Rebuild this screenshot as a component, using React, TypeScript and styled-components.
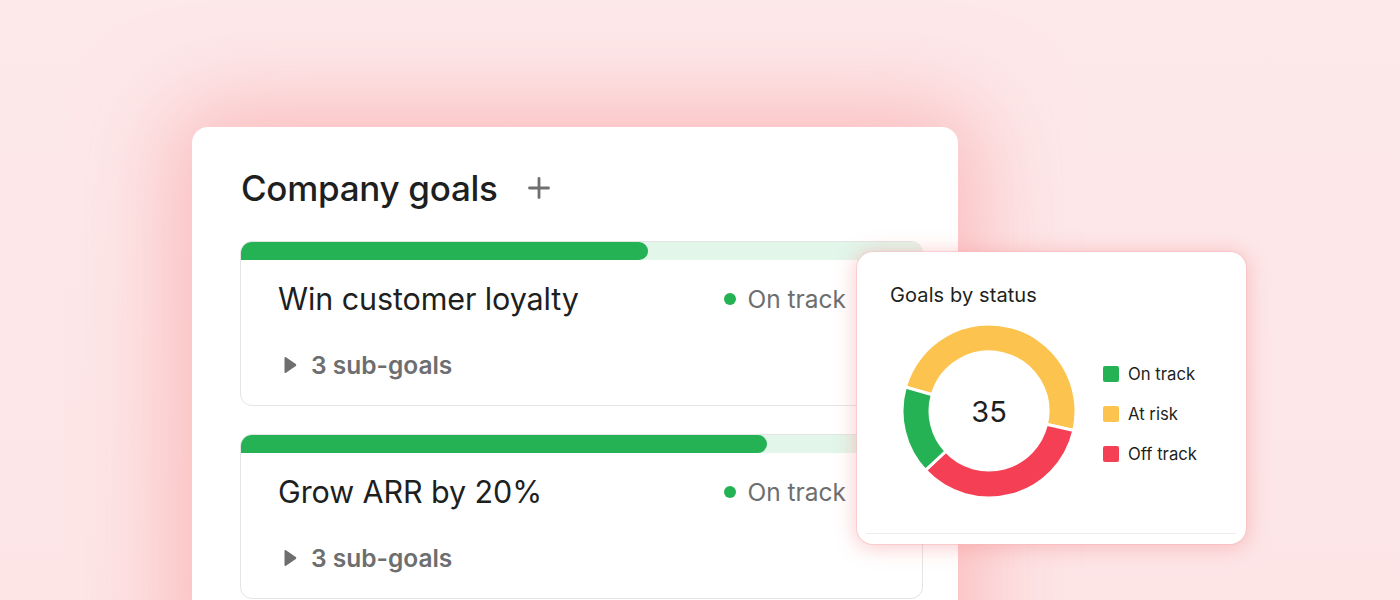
import React from "react";
import styled, { createGlobalStyle } from "styled-components";

const Global = createGlobalStyle`
  html, body { margin: 0; padding: 0; background: #fde6e8; }
  body { font-family: Inter, "Noto Sans", "Liberation Sans", sans-serif; -webkit-font-smoothing: antialiased; }
`;

const Stage = styled.div`
  position: relative;
  width: 1400px;
  height: 600px;
  overflow: hidden;
  background: linear-gradient(180deg, #fde9ea 0%, #fde5e6 100%);
  padding: 127px 0 0 192px;
  box-sizing: border-box;
`;

const MainCard = styled.section`
  width: 766px;
  height: 560px;
  box-sizing: border-box;
  background: #ffffff;
  border-radius: 16px;
  padding: 41px 35px 0 48px;
  box-shadow: 0 0 90px 20px rgba(249, 150, 152, 0.55);
  display: flex;
  flex-direction: column;
  gap: 33px;
`;

const Header = styled.div`
  display: flex;
  align-items: center;
  gap: 30px;
  height: 40px;
`;

const Title = styled.h1`
  margin: 0 0 0 1px;
  font-size: 35px;
  line-height: 40px;
  font-weight: 500;
  color: #1e1f21;
  letter-spacing: -0.3px;
`;

const PlusIcon = styled.svg`
  width: 22px;
  height: 22px;
  display: block;
`;

const GoalList = styled.div`
  display: flex;
  flex-direction: column;
  gap: 28px;
`;

const GoalCard = styled.article`
  border: 1px solid #e4e4e4;
  border-radius: 12px;
  overflow: hidden;
  background: #fff;
  box-sizing: border-box;
  height: 165px;
  display: flex;
  flex-direction: column;
`;

const Track = styled.div`
  height: 18px;
  background: #e2f6ea;
  flex: none;
`;

const Fill = styled.div`
  height: 100%;
  background: #25b255;
  border-radius: 0 9px 9px 0;
`;

const Body = styled.div`
  padding: 21px 76px 0 37px;
  display: flex;
  flex-direction: column;
  gap: 33px;
`;

const TopRow = styled.div`
  display: flex;
  align-items: center;
  justify-content: space-between;
  height: 36px;
`;

const GoalName = styled.h2`
  margin: 0;
  font-size: 30.5px;
  line-height: 36px;
  font-weight: 400;
  color: #1e1f21;
  letter-spacing: -0.1px;
`;

const Status = styled.div`
  display: flex;
  align-items: center;
  gap: 11px;
  font-size: 24.5px;
  color: #6d6e6f;
`;

const Dot = styled.span<{ $color: string }>`
  width: 12px;
  height: 12px;
  border-radius: 50%;
  background: ${(p) => p.$color};
`;

const SubRow = styled.div`
  display: flex;
  align-items: center;
  gap: 14px;
  padding-left: 6px;
  height: 30px;
  font-size: 24.5px;
  font-weight: 600;
  color: #6d6e6f;
`;

const Caret = styled.svg`
  width: 13px;
  height: 18px;
  display: block;
`;

const ChartCard = styled.aside`
  position: absolute;
  left: 857px;
  top: 252px;
  width: 389px;
  height: 292px;
  box-sizing: border-box;
  background: #fff;
  border-radius: 16px;
  box-shadow: 0 2px 20px 2px rgba(245, 140, 145, 0.45), 0 0 0 1px rgba(250, 200, 200, 0.5);
  padding: 31px 10px 0 33px;
  display: flex;
  flex-direction: column;
`;

const ChartTitle = styled.h3`
  margin: 0;
  font-size: 20px;
  line-height: 24px;
  font-weight: 400;
  color: #1e1f21;
  letter-spacing: 0.1px;
`;

const ChartBody = styled.div`
  display: flex;
  align-items: center;
  gap: 26px;
  padding-left: 11px;
  margin-top: 16px;
  height: 176px;
`;

const DonutWrap = styled.div`
  position: relative;
  width: 176px;
  height: 176px;
  flex: none;
`;

const DonutNumber = styled.div`
  position: absolute;
  inset: 0;
  display: flex;
  align-items: center;
  justify-content: center;
  font-size: 29px;
  font-weight: 400;
  color: #1e1f21;
`;

const Legend = styled.ul`
  list-style: none;
  margin: 0;
  padding: 0;
  display: flex;
  flex-direction: column;
  gap: 18px;
  margin-top: 6px;
`;

const LegendItem = styled.li`
  display: flex;
  align-items: center;
  gap: 9px;
  font-size: 16.7px;
  line-height: 22px;
  color: #1e1f21;
`;

const Swatch = styled.span<{ $color: string }>`
  width: 16px;
  height: 16px;
  border-radius: 2px;
  background: ${(p) => p.$color};
`;

const Divider = styled.hr`
  margin: 34px 0 0 -24px;
  width: 370px;
  border: none;
  border-top: 1px solid #ececec;
`;

const GREEN = "#25b255";
const YELLOW = "#fcc44f";
const RED = "#f43f55";

function arcPath(cx: number, cy: number, ro: number, ri: number, a0: number, a1: number) {
  const rad = (a: number) => ((a - 90) * Math.PI) / 180;
  const p = (r: number, a: number) => [cx + r * Math.cos(rad(a)), cy + r * Math.sin(rad(a))];
  const large = a1 - a0 > 180 ? 1 : 0;
  const [x0, y0] = p(ro, a0);
  const [x1, y1] = p(ro, a1);
  const [x2, y2] = p(ri, a1);
  const [x3, y3] = p(ri, a0);
  return `M${x0} ${y0} A${ro} ${ro} 0 ${large} 1 ${x1} ${y1} L${x2} ${y2} A${ri} ${ri} 0 ${large} 0 ${x3} ${y3} Z`;
}

const segments = [
  { color: YELLOW, from: 286, to: 463 },
  { color: RED, from: 103, to: 227 },
  { color: GREEN, from: 227, to: 286 },
];

function Donut() {
  return (
    <DonutWrap>
      <svg width="176" height="176" viewBox="0 0 176 176">
        {segments.map((s, i) => (
          <path key={i} d={arcPath(88, 88, 87, 59, s.from, s.to)} fill={s.color} stroke="#fff" strokeWidth="3" strokeLinejoin="miter" />
        ))}
      </svg>
      <DonutNumber>35</DonutNumber>
    </DonutWrap>
  );
}

const goals = [
  { name: "Win customer loyalty", progress: 407 },
  { name: "Grow ARR by 20%", progress: 526 },
];

export default function App() {
  return (
    <>
      <Global />
      <Stage>
        <MainCard>
          <Header>
            <Title>Company goals</Title>
            <PlusIcon viewBox="0 0 22 22">
              <path d="M11 1.5v19M1.5 11h19" stroke="#6f6f6f" strokeWidth="2.8" strokeLinecap="round" />
            </PlusIcon>
          </Header>
          <GoalList>
            {goals.map((g) => (
              <GoalCard key={g.name}>
                <Track>
                  <Fill style={{ width: g.progress }} />
                </Track>
                <Body>
                  <TopRow>
                    <GoalName>{g.name}</GoalName>
                    <Status>
                      <Dot $color={GREEN} />
                      On track
                    </Status>
                  </TopRow>
                  <SubRow>
                    <Caret viewBox="0 0 13 18">
                      <path d="M2 1.2 L11.8 8 Q13 9 11.8 10 L2 16.8 Q0.5 17.6 0.5 16 V2 Q0.5 0.4 2 1.2 Z" fill="#6d6e6f" />
                    </Caret>
                    3 sub-goals
                  </SubRow>
                </Body>
              </GoalCard>
            ))}
          </GoalList>
        </MainCard>
        <ChartCard>
          <ChartTitle>Goals by status</ChartTitle>
          <ChartBody>
            <Donut />
            <Legend>
              <LegendItem><Swatch $color={GREEN} />On track</LegendItem>
              <LegendItem><Swatch $color={YELLOW} />At risk</LegendItem>
              <LegendItem><Swatch $color={RED} />Off track</LegendItem>
            </Legend>
          </ChartBody>
          <Divider />
        </ChartCard>
      </Stage>
    </>
  );
}
